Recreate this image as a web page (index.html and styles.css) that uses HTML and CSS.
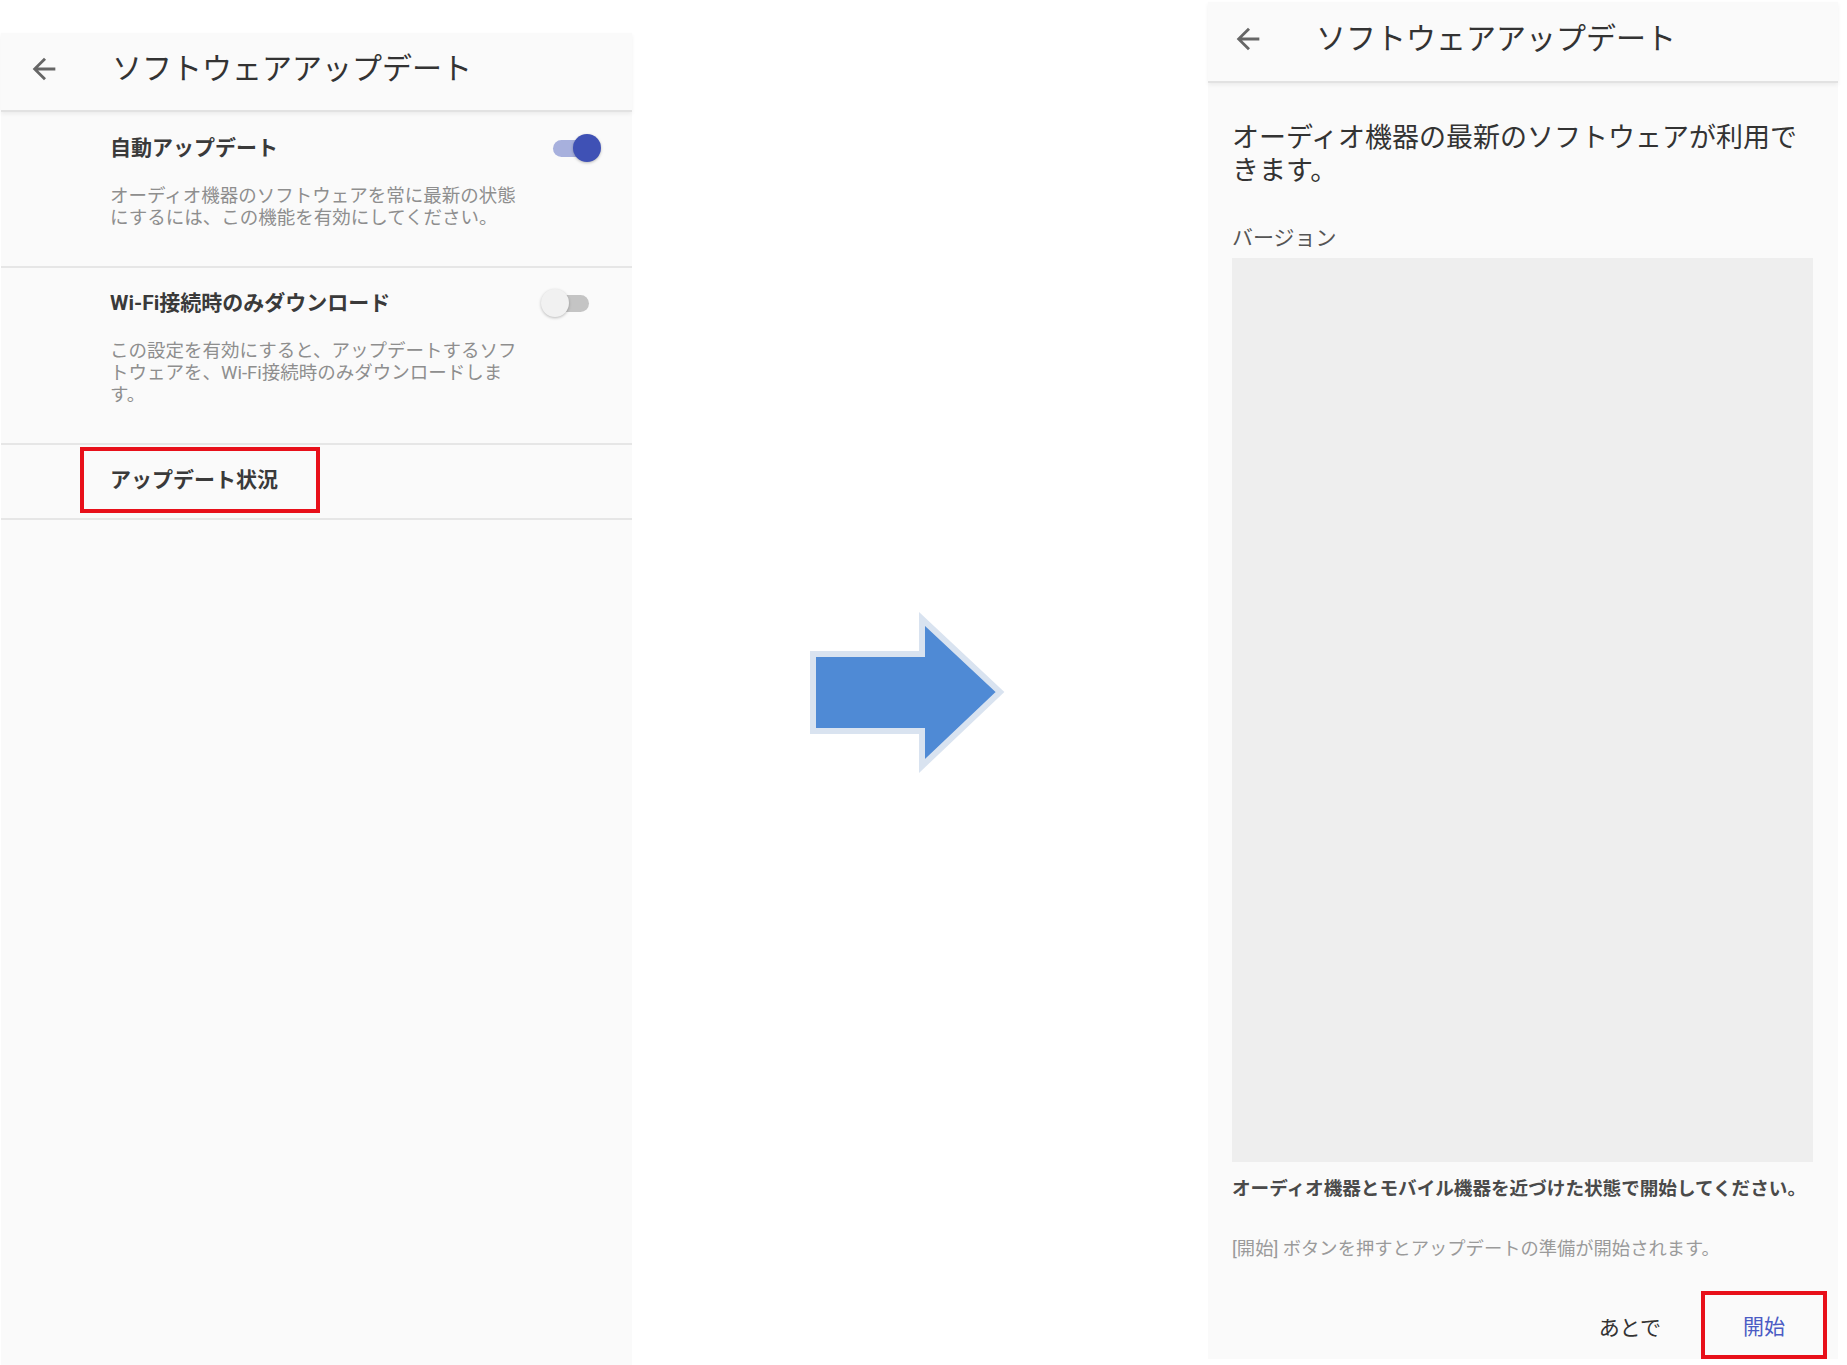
FILE: index.html
```html
<!DOCTYPE html>
<html lang="ja">
<head>
<meta charset="utf-8">
<title>ソフトウェアアップデート</title>
<link rel="stylesheet" href="styles.css">
</head>
<body>
<div class="stage">
  <section class="panel panel-left">
    <header class="appbar">
      <svg class="back" viewBox="0 0 24 24" width="34" height="34"><path d="M20 11H7.83l5.59-5.59L12 4l-8 8 8 8 1.41-1.41L7.83 13H20v-2z"/></svg>
      <h1 class="appbar-title">ソフトウェアアップデート</h1>
    </header>
    <div class="setting">
      <div class="setting-head">
        <span class="setting-title">自動アップデート</span>
        <span class="switch switch-on"><span class="track"></span><span class="thumb"></span></span>
      </div>
      <p class="setting-desc">オーディオ機器のソフトウェアを常に最新の状態<br>にするには、この機能を有効にしてください。</p>
    </div>
    <div class="setting">
      <div class="setting-head">
        <span class="setting-title">Wi-Fi接続時のみダウンロード</span>
        <span class="switch switch-off"><span class="track"></span><span class="thumb"></span></span>
      </div>
      <p class="setting-desc">この設定を有効にすると、アップデートするソフ<br>トウェアを、Wi-Fi接続時のみダウンロードしま<br>す。</p>
    </div>
    <div class="status-row">
      <span class="highlight"><span class="setting-title">アップデート状況</span></span>
    </div>
  </section>

  <div class="transition">
    <svg class="big-arrow" viewBox="0 0 203 175" width="203" height="175">
      <polygon points="8,49 117,49 117,14 195,87 117,161 117,126 8,126" />
    </svg>
  </div>

  <section class="panel panel-right">
    <header class="appbar appbar-right">
      <svg class="back" viewBox="0 0 24 24" width="34" height="34"><path d="M20 11H7.83l5.59-5.59L12 4l-8 8 8 8 1.41-1.41L7.83 13H20v-2z"/></svg>
      <h1 class="appbar-title">ソフトウェアアップデート</h1>
    </header>
    <div class="update-body">
      <p class="lead">オーディオ機器の最新のソフトウェアが利用で<br>きます。</p>
      <p class="label">バージョン</p>
      <div class="version-box"></div>
      <p class="note">オーディオ機器とモバイル機器を近づけた状態で開始してください。</p>
      <p class="hint">[開始] ボタンを押すとアップデートの準備が開始されます。</p>
      <div class="actions">
        <span class="btn btn-later">あとで</span>
        <span class="btn btn-start">開始</span>
      </div>
    </div>
  </section>
</div>
</body>
</html>
```

FILE: styles.css
```css
* { box-sizing: border-box; }
html, body {
  margin: 0;
  padding: 0;
  background: #ffffff;
}
body {
  font-family: Roboto, "Noto Sans CJK JP", "Noto Sans", sans-serif;
  color: #333333;
}
p, h1 { margin: 0; }

.stage {
  display: flex;
  align-items: flex-start;
  width: 1847px;
  height: 1365px;
  overflow: hidden;
}

.panel {
  background: #fafafa;
  display: flex;
  flex-direction: column;
}
.panel-left {
  width: 631px;
  margin-left: 1px;
  margin-top: 33px;
  height: 1332px;
}
.panel-right {
  width: 630px;
  margin-top: 2px;
}

/* app bar */
.appbar {
  height: 79px;
  display: flex;
  align-items: center;
  padding-bottom: 5px;
  border-bottom: 2px solid #e2e2e2;
  box-shadow: 0 2px 4px rgba(0, 0, 0, 0.06);
}
.appbar-right { height: 81px; }
.back {
  fill: #666666;
  margin-left: 26px;
  flex: none;
}
.appbar-right .back { margin-left: 23px; }
.appbar-title {
  font-size: 30px;
  font-weight: 400;
  color: #333333;
  margin-left: 51px;
  line-height: 40px;
}
.appbar-right .appbar-title { margin-left: 51px; }

/* settings list */
.setting {
  padding: 22px 0 37px 109px;
  border-bottom: 2px solid #e6e6e6;
}
.setting + .setting { padding-top: 21px; }
.setting-head {
  display: flex;
  align-items: center;
  height: 28px;
}
.setting-title {
  font-size: 21px;
  font-weight: 700;
  color: #3a3a3a;
  line-height: 28px;
  white-space: nowrap;
}
.setting-desc {
  margin-top: 23px;
  font-size: 18.5px;
  line-height: 22px;
  color: #8e8e8e;
  white-space: nowrap;
}

/* switches */
.switch {
  position: relative;
  width: 48px;
  height: 28px;
  flex: none;
  margin-left: auto;
}
.switch .track {
  position: absolute;
  top: 6px;
  width: 40px;
  height: 17px;
  border-radius: 9px;
}
.switch .thumb {
  position: absolute;
  top: 0;
  width: 28px;
  height: 28px;
  border-radius: 50%;
  box-shadow: 0 1px 3px rgba(0, 0, 0, 0.25);
}
.switch-on { margin-right: 31px; }
.switch-on .track { left: 0; background: #a7b0dd; }
.switch-on .thumb { right: 0; background: #3f51b5; }
.switch-off { margin-right: 43px; }
.switch-off .track { right: 0; background: #c4c4c4; }
.switch-off .thumb { left: 0; background: #f1f1f1; }

.status-row {
  padding: 2px 0 5px 79px;
  border-bottom: 2px solid #e6e6e6;
}
.highlight {
  display: inline-block;
  border: 4px solid #e8101a;
  padding: 15px 38px 15px 26px;
}

/* transition arrow */
.transition {
  width: 576px;
  padding-left: 173px;
  padding-top: 605px;
  flex: none;
}
.big-arrow polygon {
  fill: #4f8ad5;
  stroke: #d9e3f0;
  stroke-width: 6;
  stroke-linejoin: miter;
}

/* right panel body */
.update-body {
  padding: 39px 25px 0 24px;
  display: flex;
  flex-direction: column;
}
.lead {
  font-size: 27px;
  line-height: 33px;
  color: #333333;
  white-space: nowrap;
}
.label {
  margin-top: 36px;
  font-size: 21px;
  line-height: 28px;
  color: #555555;
}
.version-box {
  margin-top: 6px;
  height: 904px;
  background: #eeeeee;
}
.note {
  margin-top: 15px;
  font-size: 18.6px;
  line-height: 24px;
  font-weight: 700;
  color: #4a4a4a;
  white-space: nowrap;
}
.hint {
  margin-top: 36px;
  font-size: 18.3px;
  line-height: 24px;
  color: #9a9a9a;
  white-space: nowrap;
}
.actions {
  margin-top: 30px;
  margin-right: -14px;
  display: flex;
  justify-content: flex-end;
  align-items: center;
  gap: 40px;
}
.btn {
  font-size: 21px;
  line-height: 28px;
}
.btn-later { color: #333333; padding-top: 6px; }
.btn-start {
  width: 126px;
  height: 68px;
  border: 4px solid #e8101a;
  display: flex;
  align-items: center;
  justify-content: center;
  padding-top: 4px;
  color: #4b5cc4;
}
```
